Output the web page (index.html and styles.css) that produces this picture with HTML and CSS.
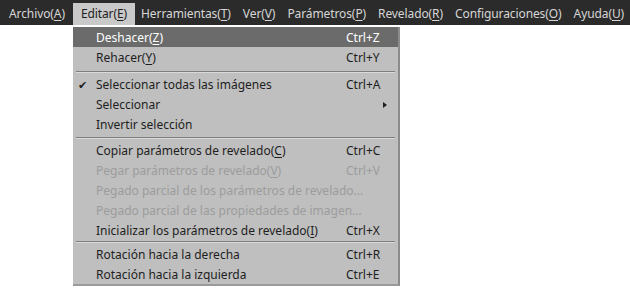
FILE: index.html
```html
<!DOCTYPE html>
<html lang="es">
<head>
    <meta charset="UTF-8">
    <title>Editar</title>
    <link rel="stylesheet" href="styles.css">
</head>
<body>

<nav class="menubar">
    <div class="menu-item">Archivo(<u>A</u>)</div>
    <div class="menu-item open">Editar(<u>E</u>)
        <ul class="dropdown">
            <li class="active"><span class="label">Deshacer(<u>Z</u>)</span><span class="key">Ctrl+Z</span></li>
            <li><span class="label">Rehacer(<u>Y</u>)</span><span class="key">Ctrl+Y</span></li>
            <li class="sep first"></li>
            <li class="checked"><span class="label">Seleccionar todas las imágenes</span><span class="key">Ctrl+A</span></li>
            <li class="sub"><span class="label">Seleccionar</span><span class="key"></span></li>
            <li><span class="label">Invertir selección</span><span class="key"></span></li>
            <li class="sep"></li>
            <li><span class="label">Copiar parámetros de revelado(<u>C</u>)</span><span class="key">Ctrl+C</span></li>
            <li class="disabled"><span class="label">Pegar parámetros de revelado(<u>V</u>)</span><span class="key">Ctrl+V</span></li>
            <li class="disabled"><span class="label">Pegado parcial de los parámetros de revelado...</span><span class="key"></span></li>
            <li class="disabled"><span class="label">Pegado parcial de las propiedades de imagen...</span><span class="key"></span></li>
            <li><span class="label">Inicializar los parámetros de revelado(<u>I</u>)</span><span class="key">Ctrl+X</span></li>
            <li class="sep last"></li>
            <li><span class="label">Rotación hacia la derecha</span><span class="key">Ctrl+R</span></li>
            <li><span class="label">Rotación hacia la izquierda</span><span class="key">Ctrl+E</span></li>
        </ul>
    </div>
    <div class="menu-item">Herramientas(<u>T</u>)</div>
    <div class="menu-item">Ver(<u>V</u>)</div>
    <div class="menu-item">Parámetros(<u>P</u>)</div>
    <div class="menu-item">Revelado(<u>R</u>)</div>
    <div class="menu-item">Configuraciones(<u>O</u>)</div>
    <div class="menu-item">Ayuda(<u>U</u>)</div>
</nav>

</body>
</html>
```

FILE: styles.css
```css
body {
    margin: 0;
    padding: 0;
    background-color: #fff;
    font-family: 'Noto Sans', 'Open Sans', sans-serif;
    font-size: 12px;
}

u {
    text-decoration-thickness: 1px;
    text-underline-offset: 2px;
}

.menubar {
    display: flex;
    height: 25px;
    padding-left: 3px;
    background-color: #2b2b2b;
    white-space: nowrap;
}

.menu-item {
    padding: 3px 6px 0;
    margin-top: 3px;
    height: 19px;
    line-height: 16px;
    letter-spacing: -0.1px;
    color: #d6d6d6;
}

.menu-item.open {
    margin-left: 2px;
    padding: 3px 8px 0;
    background-color: #c9c9c9;
    color: #1e1e1e;
}

/* dropdown sits over the page */
.dropdown {
    position: absolute;
    left: 73px;
    top: 27px;
    width: 325px;
    margin: 0;
    padding: 0;
    list-style: none;
    letter-spacing: 0;
    background-color: #bfbfbf;
    border-right: 2px solid #8c8c8c;
    border-bottom: 2px solid #9a9a9a;
    color: #1e1e1e;
}

.dropdown li {
    display: flex;
    box-sizing: border-box;
    height: 20px;
    padding: 2px 18px 0 23px;
    line-height: 18px;
    position: relative;
}

.dropdown .label {
    flex: 1;
}

.dropdown .key {
    width: 34px;
}

.dropdown li.active {
    background-color: #6b6b6b;
    color: #fff;
}

.dropdown li.disabled {
    color: #9c9c9c;
}

.dropdown li.sep {
    height: 6px;
    padding: 0;
    margin: 0 3px;
}

.dropdown li.sep.first {
    height: 7px;
}

.dropdown li.sep.last {
    height: 4px;
}

.dropdown li.sep::after {
    content: '';
    position: absolute;
    left: 0;
    right: 0;
    top: 3px;
    height: 1px;
    background-color: #7e7e7e;
    border-bottom: 1px solid #dadada;
}

.dropdown li.sep.first::after {
    top: 4px;
}

.dropdown li.sep.last::after {
    top: 1px;
}

.dropdown li.checked::before {
    content: '✔';
    position: absolute;
    left: 5px;
    font-size: 11px;
}

.dropdown li.sub::after {
    content: '';
    position: absolute;
    right: 11px;
    top: 8px;
    border-left: 4px solid #1e1e1e;
    border-top: 3px solid transparent;
    border-bottom: 3px solid transparent;
}
```
